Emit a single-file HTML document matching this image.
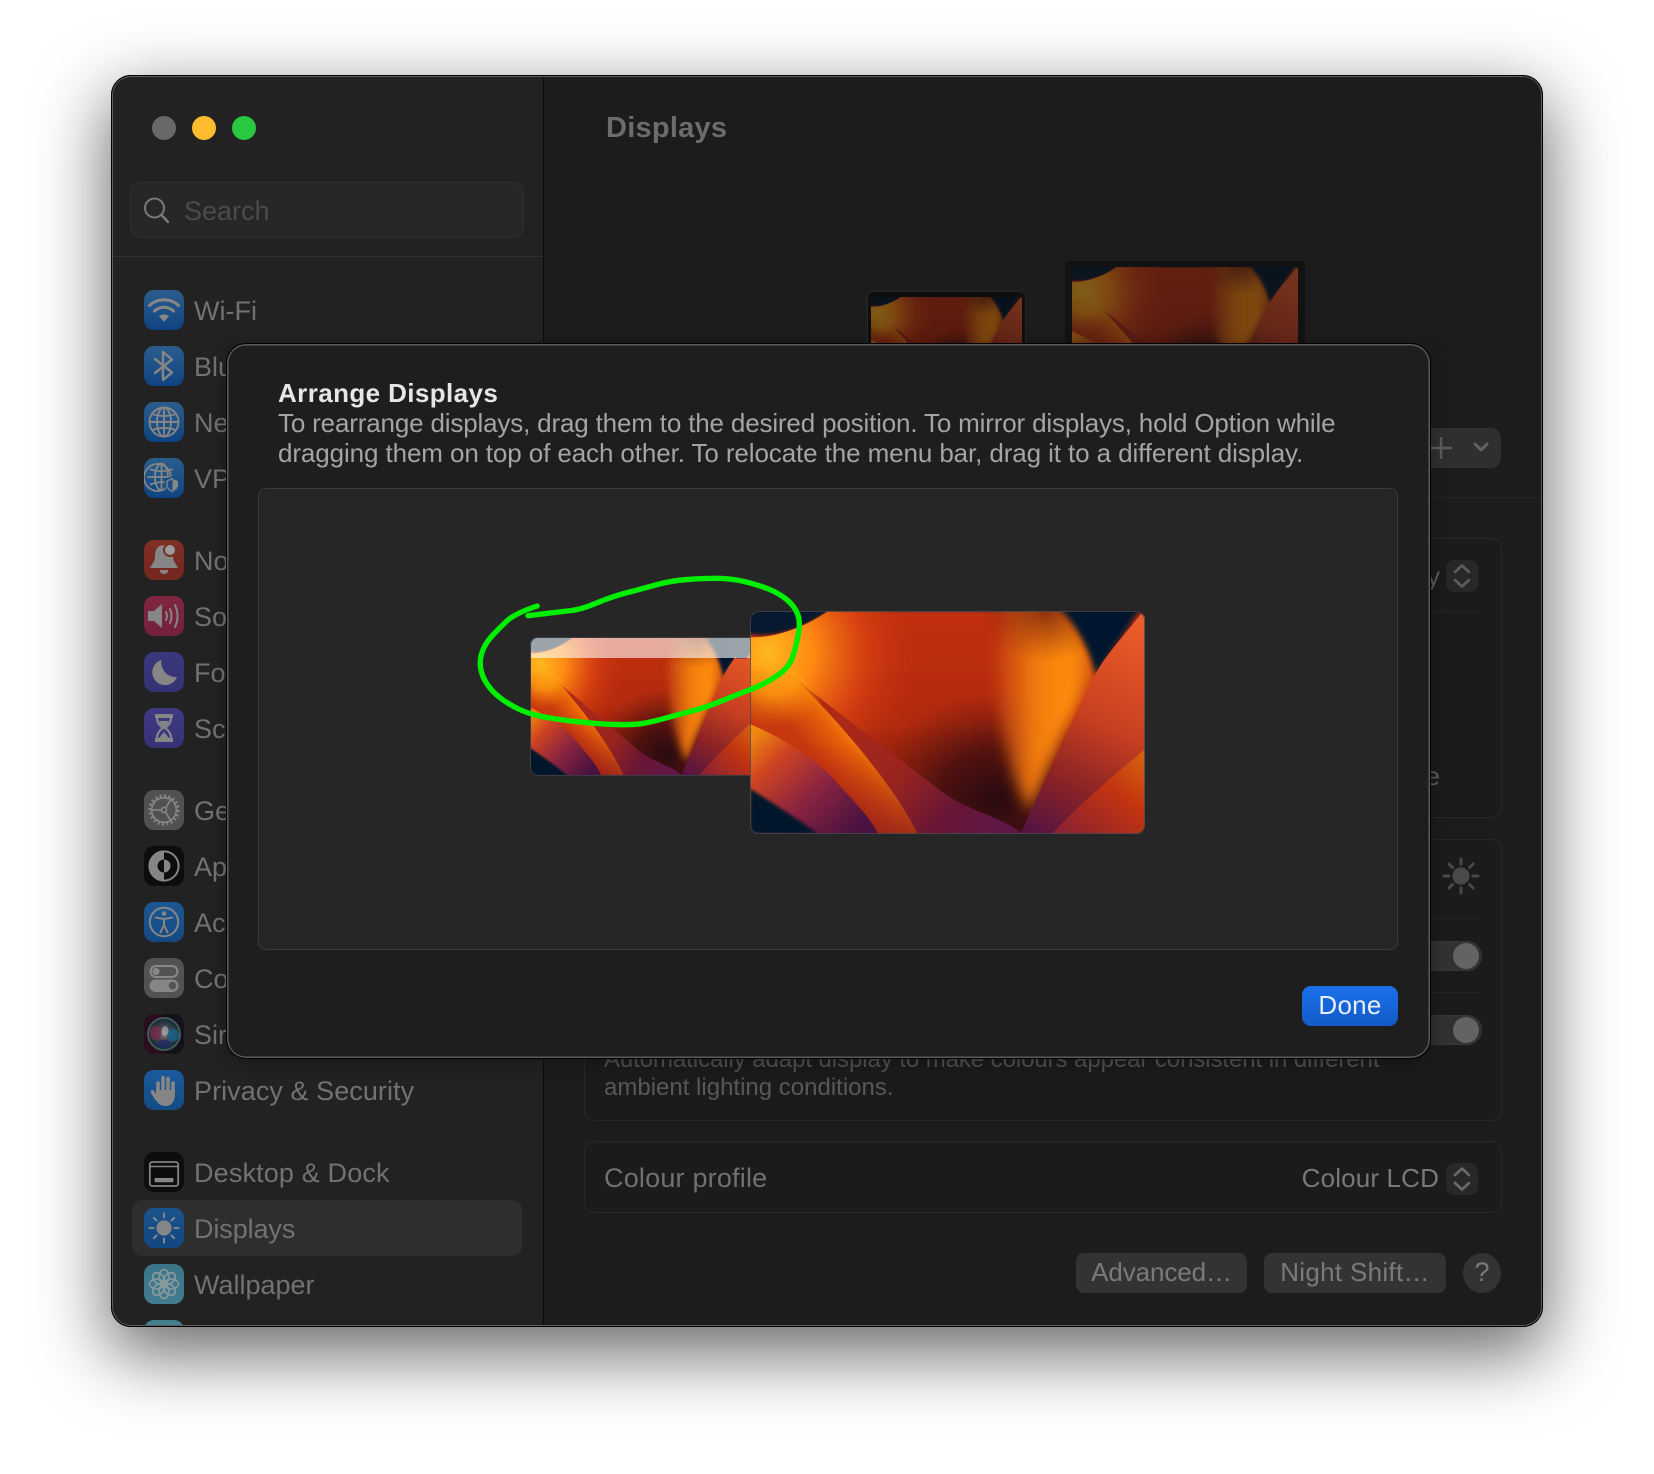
<!DOCTYPE html>
<html><head><meta charset="utf-8"><title>Displays</title>
<style>
html,body{margin:0;padding:0;background:#fff}
body{width:1654px;height:1474px;position:relative;overflow:hidden;font-family:"Liberation Sans",sans-serif}
.a{position:absolute}
.t{position:absolute;white-space:nowrap;font-size:27px;line-height:30px;color:#727272}
.ic{position:absolute;left:144px;width:40px;height:40px;border-radius:10px;overflow:hidden;filter:brightness(.92)}
.ic svg{display:block;width:40px;height:40px}
.g{fill:#929292}
.s{fill:none;stroke:#929292;stroke-width:2;stroke-linecap:round;stroke-linejoin:round}
.card{position:absolute;left:584px;width:918px;box-sizing:border-box;border:1px solid #282828;border-radius:10px;background:#1b1b1b}
.sep{position:absolute;height:1px;background:#242424}
.btn{position:absolute;background:#333;border-radius:8px;height:40px;text-align:center;color:#7a7a7a;font-size:27px;line-height:39px}
.tog{position:absolute;left:1420px;width:62px;height:30px;border-radius:15px;background:#313131;box-sizing:border-box;border:1px solid #373737}
.tog i{position:absolute;right:2px;top:1px;width:26px;height:26px;border-radius:50%;background:#636363}
</style></head><body>
<svg width="0" height="0" style="position:absolute">
<defs>
<linearGradient id="wBase" x1="0" y1="0" x2="0" y2="1"><stop offset="0" stop-color="#c2300f"/><stop offset=".5" stop-color="#b22a10"/><stop offset="1" stop-color="#6a1812"/></linearGradient>
<radialGradient id="wGlow" gradientUnits="userSpaceOnUse" cx="18" cy="42" r="150"><stop offset="0" stop-color="#ffb820"/><stop offset=".3" stop-color="#ff8a12"/><stop offset=".65" stop-color="#da4212" stop-opacity=".8"/><stop offset="1" stop-color="#c0300f" stop-opacity="0"/></radialGradient>
<radialGradient id="wDark"><stop offset="0" stop-color="#260a10" stop-opacity=".97"/><stop offset=".45" stop-color="#3a0c10" stop-opacity=".75"/><stop offset="1" stop-color="#5a1410" stop-opacity="0"/></radialGradient>
<radialGradient id="wTop"><stop offset="0" stop-color="#7a220f" stop-opacity=".85"/><stop offset="1" stop-color="#8a2a0f" stop-opacity="0"/></radialGradient>
<linearGradient id="wFlame" gradientUnits="userSpaceOnUse" x1="245" y1="0" x2="340" y2="0"><stop offset="0" stop-color="#d05010" stop-opacity=".5"/><stop offset=".4" stop-color="#f07a08"/><stop offset=".8" stop-color="#ff8e08"/><stop offset="1" stop-color="#d85e0c"/></linearGradient>
<linearGradient id="wRight" gradientUnits="userSpaceOnUse" x1="385" y1="10" x2="285" y2="221"><stop offset="0" stop-color="#ec5c2a"/><stop offset=".45" stop-color="#c84020"/><stop offset=".75" stop-color="#8a2225"/><stop offset="1" stop-color="#551442"/></linearGradient>
<linearGradient id="wRight2" gradientUnits="userSpaceOnUse" x1="394" y1="135" x2="320" y2="225"><stop offset="0" stop-color="#d8680f"/><stop offset=".45" stop-color="#c23410"/><stop offset="1" stop-color="#8c2230"/></linearGradient>
<linearGradient id="wA" gradientUnits="userSpaceOnUse" x1="70" y1="150" x2="115" y2="112"><stop offset="0" stop-color="#c8380f"/><stop offset=".5" stop-color="#e8600a"/><stop offset="1" stop-color="#ffa408"/></linearGradient>
<linearGradient id="wA2" gradientUnits="userSpaceOnUse" x1="0" y1="130" x2="0" y2="221"><stop offset="0" stop-color="#a02010" stop-opacity="0"/><stop offset="1" stop-color="#8a1c1c" stop-opacity=".7"/></linearGradient>
<radialGradient id="wAG" gradientUnits="userSpaceOnUse" cx="25" cy="50" r="65"><stop offset="0" stop-color="#ffaf18"/><stop offset=".5" stop-color="#ff9a10" stop-opacity=".85"/><stop offset="1" stop-color="#f07a08" stop-opacity="0"/></radialGradient>
<linearGradient id="wB" gradientUnits="userSpaceOnUse" x1="70" y1="80" x2="250" y2="221"><stop offset="0" stop-color="#b42a14"/><stop offset=".5" stop-color="#98241e"/><stop offset=".75" stop-color="#6a1634"/><stop offset="1" stop-color="#5e1848"/></linearGradient>
<linearGradient id="wC" gradientUnits="userSpaceOnUse" x1="10" y1="115" x2="105" y2="215"><stop offset="0" stop-color="#f08a10"/><stop offset=".25" stop-color="#cf4420"/><stop offset=".6" stop-color="#8c2440"/><stop offset="1" stop-color="#4a1240"/></linearGradient>
<filter id="b2" x="-20%" y="-20%" width="140%" height="140%"><feGaussianBlur stdDeviation="1.6"/></filter>
<filter id="b3" x="-30%" y="-30%" width="160%" height="160%"><feGaussianBlur stdDeviation="3"/></filter>
<filter id="b6" x="-30%" y="-30%" width="160%" height="160%"><feGaussianBlur stdDeviation="7"/></filter>
<clipPath id="wMain"><path d="M0 26 C22 27 52 18 78 0 H394 V221 H0Z"/></clipPath>
<clipPath id="wRect"><rect width="394" height="221"/></clipPath>
<radialGradient id="siri" cx=".5" cy=".5" r=".55"><stop offset="0" stop-color="#9a9a9a"/><stop offset=".3" stop-color="#55505a"/><stop offset=".75" stop-color="#1c3442"/><stop offset="1" stop-color="#251c26"/></radialGradient>
<g id="wp" clip-path="url(#wRect)">
<rect width="394" height="221" fill="#06192e"/>
<path d="M-6 22 C22 28 52 18 78 0 H394 V221 H-6Z" fill="url(#wBase)" filter="url(#b2)"/>
<g clip-path="url(#wMain)"><rect width="394" height="221" fill="url(#wGlow)"/></g>
<ellipse cx="245" cy="185" rx="125" ry="105" fill="url(#wDark)"/>
<path d="M256 -8 C244 40 244 110 262 160 C268 178 274 190 279 198 C300 150 325 90 350 58 C345 30 326 5 312 -8Z" fill="url(#wFlame)" filter="url(#b6)"/>
<ellipse cx="295" cy="0" rx="68" ry="50" fill="url(#wTop)"/>
<path d="M303 -8 C322 8 338 34 345 64 L394 -8Z" fill="#06192e" filter="url(#b3)"/>
<path d="M390 3 C370 28 356 42 345 62 C325 100 295 165 270 221 H394 V3Z" fill="url(#wRight)"/>
<path d="M394 137 C360 165 325 195 301 221 H394Z" fill="url(#wRight2)"/>
<path d="M40 62 C85 100 135 135 190 178 C220 200 255 205 271 221 H100Z" fill="url(#wB)"/>
<path d="M-2 60 C15 58 30 60 40 62 C90 110 145 175 167 221 H128 L0 221Z" fill="url(#wA)"/>
<path d="M-2 60 C15 58 30 60 40 62 C90 110 145 175 167 221 H128 L0 221Z" fill="url(#wA2)"/>
<path d="M-2 55 H42 C90 110 145 175 167 221 H0Z" fill="url(#wAG)"/>
<path d="M0 112 C30 125 60 142 82 165 C105 190 120 205 128 221 H0Z" fill="url(#wC)"/>
<path d="M0 176 C22 190 46 205 68 221 H0Z" fill="#04182a" filter="url(#b2)"/>
</g>
</defs></svg>

<!-- WINDOW -->
<div class="a" style="left:111px;top:75px;width:1432px;height:1252px;border-radius:20px;box-shadow:0 24px 70px 4px rgba(0,0,0,.58)"></div>
<div class="a" style="left:111px;top:75px;width:1432px;height:1252px;border-radius:20px;overflow:hidden;background:#1c1c1c">
<div class="a" style="left:-111px;top:-75px;width:1654px;height:1474px">

<div class="a" style="left:111px;top:75px;width:432px;height:1252px;background:#222"></div>
<div class="a" style="left:543px;top:75px;width:1px;height:1252px;background:#0c0c0c"></div>
<div class="a" style="left:111px;top:256px;width:432px;height:1px;background:#303030"></div>

<div class="a" style="left:152px;top:116px;width:24px;height:24px;border-radius:50%;background:#686868"></div>
<div class="a" style="left:192px;top:116px;width:24px;height:24px;border-radius:50%;background:#febc2e"></div>
<div class="a" style="left:232px;top:116px;width:24px;height:24px;border-radius:50%;background:#28c840"></div>

<div class="a" style="left:130px;top:182px;width:394px;height:56px;box-sizing:border-box;background:#272727;border:1px solid #2f2f2f;border-radius:11px"></div>
<svg class="a" style="left:140px;top:194px" width="32" height="32" viewBox="0 0 32 32"><circle cx="14.5" cy="14" r="9.5" fill="none" stroke="#7a7a7a" stroke-width="2"/><path d="M21.5 21 L28 28" stroke="#7a7a7a" stroke-width="2.4" stroke-linecap="round"/></svg>
<div class="t" style="left:184px;top:196px;color:#4b4b4b">Search</div>

<div class="a" style="left:132px;top:1200px;width:390px;height:56px;border-radius:10px;background:#2e2e2e"></div>

<!-- Sidebar labels -->
<div class="t" style="left:194px;top:296px">Wi-Fi</div>
<div class="t" style="left:194px;top:352px">Bluetooth</div>
<div class="t" style="left:194px;top:408px">Network</div>
<div class="t" style="left:194px;top:464px">VPN</div>
<div class="t" style="left:194px;top:546px">Notifications</div>
<div class="t" style="left:194px;top:602px">Sound</div>
<div class="t" style="left:194px;top:658px">Focus</div>
<div class="t" style="left:194px;top:714px">Screen Time</div>
<div class="t" style="left:194px;top:796px">General</div>
<div class="t" style="left:194px;top:852px">Appearance</div>
<div class="t" style="left:194px;top:908px">Accessibility</div>
<div class="t" style="left:194px;top:964px">Control Centre</div>
<div class="t" style="left:194px;top:1020px">Siri</div>
<div class="t" style="left:194px;top:1076px;letter-spacing:.06px">Privacy &amp; Security</div>
<div class="t" style="left:194px;top:1158px;letter-spacing:.15px">Desktop &amp; Dock</div>
<div class="t" style="left:194px;top:1214px;letter-spacing:-.1px">Displays</div>
<div class="t" style="left:194px;top:1270px">Wallpaper</div>

<!-- Icons -->
<div class="ic" style="top:290px;background:linear-gradient(#2e6599,#114a8d)"><svg viewBox="0 0 40 40"><path class="s" style="stroke-width:3" d="M5.5 15.5 A21 21 0 0 1 34.5 15.5"/><path class="s" style="stroke-width:3" d="M10.5 21 A14 14 0 0 1 29.5 21"/><path class="g" d="M15 26 Q20 22.5 25 26 L20 32 Z"/></svg></div>
<div class="ic" style="top:346px;background:linear-gradient(#2e6599,#114a8d)"><svg viewBox="0 0 40 40"><path class="s" style="stroke-width:2.4" d="M11 13 L28 26.5 L19 34 V6 L28 13.5 L11 27"/></svg></div>
<div class="ic" style="top:402px;background:linear-gradient(#2e6599,#114a8d)"><svg viewBox="0 0 40 40"><g class="s" style="stroke-width:1.9"><circle cx="20" cy="20" r="14.5"/><ellipse cx="20" cy="20" rx="7" ry="14.5"/><path d="M20 5.5 V34.5 M5.5 20 H34.5 M8 12 Q20 16 32 12 M8 28 Q20 24 32 28"/></g></svg></div>
<div class="ic" style="top:458px;background:linear-gradient(#2e6599,#114a8d)"><svg viewBox="0 0 40 40"><g class="s" style="stroke-width:1.8"><path d="M27 19 A13.5 13.5 0 1 0 17 32.5"/><ellipse cx="17.5" cy="19" rx="6.5" ry="13.5"/><path d="M17.5 5.5 V32 M4 19 H26 M6.5 11.5 Q17 15 28 11.5 M6.5 26.5 Q12 24 20 24"/></g><path d="M28 18 L36 21 V27 Q36 33 28 36 Q21 33 21 27 V21Z" fill="#1a5592"/><path class="g" d="M28.5 21 L34 23 V27.5 Q34 31 28.5 33.5Z"/><path class="s" style="stroke-width:1.4" d="M28.5 20.5 L23 23 V27.5 Q23 31 28.5 33.5"/></svg></div>

<div class="ic" style="top:540px;background:linear-gradient(#8c3428,#7c2a22)"><svg viewBox="0 0 40 40"><path class="g" d="M20 5 C13 5 11 11 11 16 C11 22 8 24 6 28 H34 C32 24 29 22 29 16 C29 11 27 5 20 5Z"/><path class="g" d="M15.5 30 H24.5 Q23.5 34 20 34 Q16.5 34 15.5 30Z"/><circle cx="26" cy="10" r="7" fill="#85302a"/><circle cx="26" cy="10" r="5" fill="#a8a8a8"/></svg></div>
<div class="ic" style="top:596px;background:linear-gradient(#8c2a46,#7e2340)"><svg viewBox="0 0 40 40"><path class="g" d="M4 15 H10 L18 8 V32 L10 25 H4Z"/><g class="s"><path d="M22 16 Q24 20 22 24"/><path d="M26 13 Q29 20 26 27"/><path d="M31 9 Q36 20 31 31"/></g></svg></div>
<div class="ic" style="top:652px;background:linear-gradient(#403c88,#3a367e)"><svg viewBox="0 0 40 40"><path class="g" d="M17.5 8 A12.8 12.8 0 1 0 33 25 A14.5 14.5 0 0 1 17.5 8Z"/></svg></div>
<div class="ic" style="top:708px;background:linear-gradient(#443e8e,#3c3682)"><svg viewBox="0 0 40 40"><path class="g" d="M11 6 H29 V10 H11Z M11 30 H29 V34 H11Z"/><path class="s" style="stroke-width:2.2" d="M13 10 Q13 16 19 20 Q13 24 13 30 M27 10 Q27 16 21 20 Q27 24 27 30"/><path class="g" d="M15 13 H25 Q24 17 20 19.5 Q16 17 15 13Z M20 24 L25 30 H15Z"/></svg></div>

<div class="ic" style="top:790px;background:#585858"><svg viewBox="0 0 40 40"><circle cx="20" cy="20" r="14.2" fill="none" stroke="#909090" stroke-width="3" stroke-dasharray="2 2.45"/><circle cx="20" cy="20" r="12.3" class="s" style="stroke-width:1.6"/><circle cx="20" cy="20" r="2.6" class="s" style="stroke-width:1.6"/><path class="s" style="stroke-width:1.6" d="M21.8 18 L27 9 M17.4 20 H8 M21.6 22.3 L27 31"/></svg></div>
<div class="ic" style="top:846px;background:#0e0e0e"><svg viewBox="0 0 40 40"><circle cx="20" cy="20" r="14.6" fill="none" stroke="#909090" stroke-width="2"/><path class="g" d="M20 5 A15 15 0 0 0 20 35Z"/><path d="M20 13.5 A6.5 6.5 0 0 0 20 26.5Z" fill="#0e0e0e"/><path class="g" d="M20 13.5 A6.5 6.5 0 0 1 20 26.5Z"/></svg></div>
<div class="ic" style="top:902px;background:linear-gradient(#1f609f,#144f8f)"><svg viewBox="0 0 40 40"><circle class="s" cx="20" cy="20" r="14.2" style="stroke-width:2"/><circle class="g" cx="20" cy="11.5" r="2.3"/><path class="s" style="stroke-width:2" d="M11.5 15.5 L20 17 L28.5 15.5 M20 17 V23 L16.5 30.5 M20 23 L23.5 30.5"/></svg></div>
<div class="ic" style="top:958px;background:#5a5a5a"><svg viewBox="0 0 40 40"><rect x="6.5" y="8" width="27" height="11" rx="5.5" fill="none" stroke="#949494" stroke-width="2"/><circle class="g" cx="12" cy="13.5" r="3.6"/><rect class="g" x="5.5" y="21.5" width="29" height="12.5" rx="6.2"/><circle cx="28.5" cy="27.7" r="3.8" fill="#5a5a5a"/></svg></div>
<div class="ic" style="top:1014px;background:#17131a"><svg viewBox="0 0 40 40"><rect width="20" height="40" fill="#33101f" opacity=".8"/><circle cx="20" cy="20" r="17" fill="url(#siri)"/><circle cx="20" cy="20" r="16" fill="none" stroke="#4d6a68" stroke-width="1.6"/><ellipse cx="11.5" cy="19" rx="6" ry="7" fill="#8c2c50" opacity=".7"/><ellipse cx="29" cy="21" rx="6" ry="6.5" fill="#1a6a94" opacity=".8"/><ellipse cx="20" cy="30" rx="7" ry="4" fill="#20306e" opacity=".8"/><ellipse cx="21" cy="17" rx="3.5" ry="5" fill="#b6b6b6" opacity=".7"/></svg></div>
<div class="ic" style="top:1070px;background:linear-gradient(#1e62ac,#15528f)"><svg viewBox="0 0 40 40"><g class="s" style="stroke-width:3.6"><path d="M14 13 V24 M19 7.5 V24 M24 8.5 V24 M29 13 V26"/><path d="M8.5 22 L12.5 28.5"/></g><path class="g" d="M12 20 H30.8 V26 Q30 36 21 36 Q15 36 12 30Z"/></svg></div>

<div class="ic" style="top:1152px;background:#0e0e0e"><svg viewBox="0 0 40 40"><rect x="5.8" y="10" width="28.4" height="24" rx="2.5" fill="none" stroke="#8e8e8e" stroke-width="1.8"/><path d="M6 14.5 H34" stroke="#8e8e8e" stroke-width="1.6"/><rect class="g" x="10.5" y="26" width="19" height="4.2" rx=".8"/></svg></div>
<div class="ic" style="top:1208px;background:linear-gradient(#1d5b98,#124c8c)"><svg viewBox="0 0 40 40"><circle class="g" cx="20" cy="20" r="7.6"/><path class="s" style="stroke-width:2" d="M20 5.5 V9.5 M20 30.5 V34.5 M5.5 20 H9.5 M30.5 20 H34.5 M9.8 9.8 L12.5 12.5 M27.5 27.5 L30.2 30.2 M9.8 30.2 L12.5 27.5 M27.5 12.5 L30.2 9.8"/></svg></div>
<div class="ic" style="top:1264px;background:linear-gradient(#3f7f94,#49879a)"><svg viewBox="0 0 40 40"><g fill="none" stroke="#93a8ad" stroke-width="1.6"><ellipse cx="20" cy="12.5" rx="4.8" ry="7"/><ellipse cx="20" cy="12.5" rx="4.8" ry="7" transform="rotate(45 20 20)"/><ellipse cx="20" cy="12.5" rx="4.8" ry="7" transform="rotate(90 20 20)"/><ellipse cx="20" cy="12.5" rx="4.8" ry="7" transform="rotate(135 20 20)"/><ellipse cx="20" cy="12.5" rx="4.8" ry="7" transform="rotate(180 20 20)"/><ellipse cx="20" cy="12.5" rx="4.8" ry="7" transform="rotate(225 20 20)"/><ellipse cx="20" cy="12.5" rx="4.8" ry="7" transform="rotate(270 20 20)"/><ellipse cx="20" cy="12.5" rx="4.8" ry="7" transform="rotate(315 20 20)"/></g></svg></div>
<div class="ic" style="top:1320px;background:#4a8a9b"></div>

<!-- Main pane -->
<div class="t" style="left:606px;top:111px;font-size:29px;line-height:34px;font-weight:bold;letter-spacing:.25px;color:#6c6c6c">Displays</div>

<div class="a" style="left:867px;top:291px;width:159px;height:120px;background:#0e0e0e;border:1px solid #262626;box-sizing:border-box;border-radius:6px 6px 0 0"></div>
<svg class="a" style="left:871px;top:297px;opacity:.46" width="151" height="84" viewBox="0 0 394 221" preserveAspectRatio="none"><use href="#wp"/></svg>
<div class="a" style="left:1065px;top:261px;width:240px;height:150px;background:#121212;border-radius:3px 3px 0 0"></div>
<svg class="a" style="left:1072px;top:267px;opacity:.46" width="226" height="127" viewBox="0 0 394 221" preserveAspectRatio="none"><use href="#wp"/></svg>

<div class="a" style="left:1400px;top:428px;width:101px;height:40px;border-radius:10px;background:#2f2f2f"></div>
<svg class="a" style="left:1425px;top:432px" width="70" height="32" viewBox="0 0 70 32"><path d="M16 5 V27 M5 16 H27" stroke="#5c5c5c" stroke-width="2.4"/><path d="M50 12 L56 18 L62 12" fill="none" stroke="#626262" stroke-width="3" stroke-linecap="round" stroke-linejoin="round"/></svg>
<div class="a" style="left:544px;top:497px;width:999px;height:1px;background:#262626"></div>

<div class="card" style="top:538px;height:280px"></div>
<div class="t" style="left:1200px;top:561px;width:240px;text-align:right;color:#5a5a5a;font-size:26px">Main display</div>
<div class="a" style="left:1446px;top:560px;width:32px;height:32px;border-radius:8px;background:#282828"></div>
<svg class="a" style="left:1446px;top:560px" width="32" height="32" viewBox="0 0 32 32"><path d="M9 12 L16 5.5 L23 12 M9 20 L16 26.5 L23 20" fill="none" stroke="#5d5d5d" stroke-width="2.6" stroke-linecap="round" stroke-linejoin="round"/></svg>
<div class="sep" style="left:604px;top:611px;width:877px"></div>
<div class="t" style="left:1200px;top:761px;width:240px;text-align:right;color:#5a5a5a;font-size:26px">More Space</div>

<div class="card" style="top:839px;height:282px"></div>
<svg class="a" style="left:1441px;top:856px" width="40" height="40" viewBox="0 0 40 40"><circle cx="20" cy="20" r="8.6" fill="#4a4a4a"/><path d="M20 3 V8 M20 32 V37 M3 20 H8 M32 20 H37 M8 8 L11.4 11.4 M28.6 28.6 L32 32 M8 32 L11.4 28.6 M28.6 11.4 L32 8" stroke="#4a4a4a" stroke-width="3" stroke-linecap="round"/></svg>
<div class="sep" style="left:604px;top:918px;width:877px"></div>
<div class="tog" style="top:941px"><i></i></div>
<div class="sep" style="left:604px;top:992px;width:877px"></div>
<div class="tog" style="top:1015px"><i></i></div>
<div class="t" style="left:604px;top:1046px;font-size:24px;line-height:28px;letter-spacing:-.08px;color:#515151">Automatically adapt display to make colours appear consistent in different</div>
<div class="t" style="left:604px;top:1074px;font-size:24px;line-height:28px;color:#585858">ambient lighting conditions.</div>

<div class="card" style="top:1141px;height:72px"></div>
<div class="t" style="left:604px;top:1163px;color:#717171;font-size:27px;letter-spacing:.2px">Colour profile</div>
<div class="t" style="left:1201px;top:1163px;width:238px;text-align:right;color:#797979;font-size:26px;letter-spacing:.15px">Colour LCD</div>
<div class="a" style="left:1446px;top:1163px;width:32px;height:32px;border-radius:8px;background:#282828"></div>
<svg class="a" style="left:1446px;top:1163px" width="32" height="32" viewBox="0 0 32 32"><path d="M9 12 L16 5.5 L23 12 M9 20 L16 26.5 L23 20" fill="none" stroke="#6a6a6a" stroke-width="2.6" stroke-linecap="round" stroke-linejoin="round"/></svg>

<div class="btn" style="left:1076px;top:1253px;width:171px;font-size:26px;letter-spacing:-.1px">Advanced…</div>
<div class="btn" style="left:1264px;top:1253px;width:182px;font-size:26px;letter-spacing:.3px">Night Shift…</div>
<div class="btn" style="left:1463px;top:1253px;width:38px;height:40px;border-radius:50%;font-size:27px">?</div>

</div>
</div>
<div class="a" style="left:111px;top:75px;width:1432px;height:1252px;box-sizing:border-box;border-radius:20px;border:1px solid #000;box-shadow:inset 0 0 0 1px #5e5e5e"></div>

<!-- DIALOG -->
<div class="a" style="left:226px;top:343px;width:1205px;height:716px;box-sizing:border-box;background:#1e1e1e;border:1px solid #000;border-radius:20px;box-shadow:inset 0 0 0 1.5px #5a5a5a,0 4px 16px rgba(0,0,0,.28)"></div>
<div class="t" style="left:278px;top:378px;font-size:26px;font-weight:bold;letter-spacing:.4px;color:#e6e6e6">Arrange Displays</div>
<div class="t" style="left:278px;top:408px;font-size:26px;letter-spacing:-.167px;color:#a4a4a4">To rearrange displays, drag them to the desired position. To mirror displays, hold Option while</div>
<div class="t" style="left:278px;top:438px;font-size:26px;letter-spacing:-.105px;color:#a4a4a4">dragging them on top of each other. To relocate the menu bar, drag it to a different display.</div>
<div class="a" style="left:258px;top:488px;width:1140px;height:462px;box-sizing:border-box;background:#262626;border:1px solid #3a3a3a;border-radius:8px"></div>

<!-- arrangement -->
<div class="a" style="left:530px;top:637px;width:221px;height:139px;border-radius:8px 0 0 8px;overflow:hidden">
<svg style="display:block" width="221" height="139" viewBox="0 0 394 221" preserveAspectRatio="none"><use href="#wp"/><path d="M345 -2 L394 -2 V24 L386 34 L368 34Z" fill="#06192e"/></svg>
<div class="a" style="left:0;top:0;width:221px;height:21px;background:rgba(255,255,255,.6)"></div>
<div class="a" style="left:0;top:0;width:221px;height:139px;box-sizing:border-box;border:1px solid #3a3c42;border-right:0;border-radius:8px 0 0 8px"></div>
</div>
<div class="a" style="left:750px;top:611px;width:395px;height:223px;border-radius:9px;overflow:hidden">
<svg style="display:block" width="395" height="223" viewBox="0 0 394 221" preserveAspectRatio="none"><use href="#wp"/></svg>
<div class="a" style="left:0;top:0;width:395px;height:223px;box-sizing:border-box;border:1px solid rgba(70,72,80,.8);border-radius:9px"></div>
</div>

<div class="a" style="left:1302px;top:986px;width:96px;height:40px;border-radius:9px;background:linear-gradient(#1b70ea,#125ac8);text-align:center;color:#e6eefc;font-size:26px;line-height:38px;letter-spacing:.25px">Done</div>

<svg class="a" style="left:460px;top:560px" width="720" height="300" viewBox="0 0 1568 900" preserveAspectRatio="none"><path d="M168 138 Q120 160 102.5 182.5 Q85 205 70 227.5 Q55 250 48.5 275 Q42 300 45 325 Q48 350 59 372.5 Q70 395 87.5 413.5 Q105 432 127.5 447 Q150 462 180 470 Q210 478 255 485 Q300 492 340 493.5 Q380 495 400 490 Q420 485 450 473.5 Q480 462 510 451 Q540 440 570 422.5 Q600 405 630 390 Q660 375 687.5 350 Q715 325 722.5 297.5 Q730 270 736 230 Q742 190 736 165 Q730 140 712.5 120 Q695 100 672.5 87.5 Q650 75 620 65 Q590 55 560 55 Q530 55 495 58.5 Q460 62 430 73.5 Q400 85 365 97.5 Q330 110 297.5 129 Q265 148 242.5 151.5 Q220 155 148 167" fill="none" stroke="#00ee00" stroke-width="5.4" stroke-linecap="round" stroke-linejoin="round" vector-effect="non-scaling-stroke"/></svg>
</body></html>
